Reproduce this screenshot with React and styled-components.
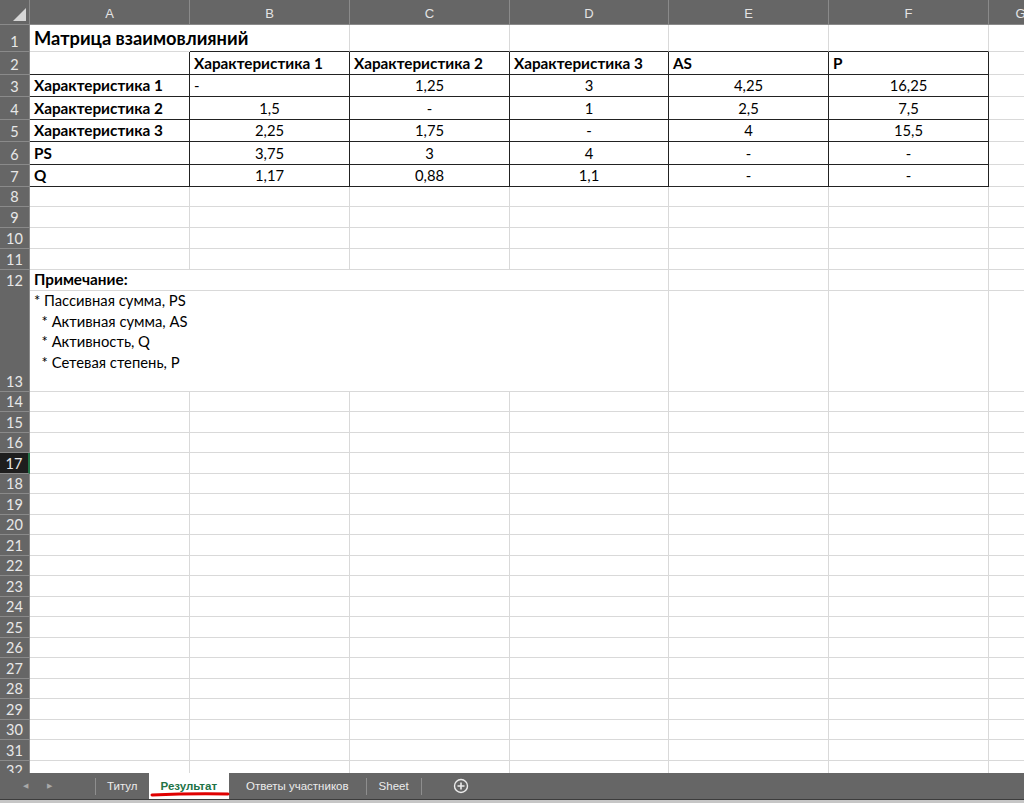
import React from "react";
import styled, { createGlobalStyle } from "styled-components";

const Global = createGlobalStyle`
  html, body { margin: 0; padding: 0; background: #ffffff; }
  body { font-family: Lato, "Noto Sans", sans-serif; }
`;

const COLS = "30px 160px 160px 160px 159px 160px 160px 64px";
const GRID = "#d9d9d9";
const DARK = "#222222";
const HEAD_BG = "#666666";
const HEAD_LINE = "#8a8a8a";

const Window = styled.div`
  width: 1024px;
  height: 803px;
  display: flex;
  flex-direction: column;
  overflow: hidden;
  background: #fff;
`;

const Sheet = styled.div`
  flex: 1;
  overflow: hidden;
  display: flex;
  flex-direction: column;
`;

const Row = styled.div`
  display: grid;
  grid-template-columns: ${COLS};
  height: ${(p) => p.$h}px;
  flex: none;
`;

const ColHead = styled.div`
  background: ${HEAD_BG};
  color: #e4e4e4;
  font-family: "Liberation Sans", Arial, sans-serif;
  font-size: 13px;
  display: flex;
  align-items: center;
  justify-content: center;
  border-right: 1px solid ${HEAD_LINE};
  border-bottom: 1px solid ${HEAD_LINE};
  box-sizing: border-box;
  padding-top: 2px;
`;

const Corner = styled(ColHead)`
  position: relative;
  &::after {
    content: "";
    position: absolute;
    right: 3px;
    bottom: 3px;
    width: 0;
    height: 0;
    border-left: 13px solid transparent;
    border-bottom: 13px solid #d6d6d6;
  }
`;

const RowHead = styled.div`
  background: ${(p) => (p.$active ? "#1e1e1e" : HEAD_BG)};
  color: #e8e8e8;
  font-family: Lato, "Noto Sans", sans-serif;
  font-size: 14.5px;
  display: flex;
  align-items: flex-end;
  justify-content: center;
  padding-bottom: 1px;
  box-sizing: border-box;
  border-bottom: 1px solid ${HEAD_LINE};
  border-right: ${(p) => (p.$active ? "2px solid #217346" : `1px solid ${HEAD_LINE}`)};
`;

const Cell = styled.div`
  grid-column: span ${(p) => p.$span || 1};
  box-sizing: border-box;
  border-right: 1px solid ${(p) => (p.$nr ? "transparent" : p.$br ? DARK : GRID)};
  border-bottom: 1px solid ${(p) => (p.$bb ? DARK : GRID)};
  display: flex;
  align-items: flex-end;
  justify-content: ${(p) =>
    p.$align === "center" ? "center" : p.$align === "right" ? "flex-end" : "flex-start"};
  padding: 0 4px 2px;
  font-family: Lato, "Noto Sans", sans-serif;
  font-size: ${(p) => (p.$size ? p.$size : p.$bold ? 15.3 : 14.8)}px;
  font-weight: ${(p) => (p.$bold ? 700 : 400)};
  color: #000;
  white-space: nowrap;
  overflow: visible;
  min-width: 0;
`;

const NoteCell = styled(Cell)`
  flex-direction: column;
  align-items: flex-start;
  justify-content: flex-start;
  padding: 0 4px;
  line-height: 20.5px;
  white-space: pre;
`;

const TabBar = styled.div`
  height: 30px;
  flex: none;
  display: flex;
  flex-direction: column;
`;

const TabStrip = styled.div`
  height: 26px;
  background: ${HEAD_BG};
  display: flex;
  align-items: stretch;
  font-family: "Liberation Sans", Arial, sans-serif;
  font-size: 11.5px;
  color: #ececec;
`;

const TabFoot = styled.div`
  flex: 1;
  background: #c6c6c6;
  border-top: 1px solid #3c3c3c;
`;

const Nav = styled.div`
  width: 95px;
  display: flex;
  align-items: center;
  gap: 19px;
  padding-left: 23px;
  box-sizing: border-box;
  color: #a8a8a8;
  font-size: 7px;
`;

const Sep = styled.div`
  width: 1px;
  background: #8e8e8e;
  margin: 5px 0 4px;
`;

const Tab = styled.div`
  position: relative;
  display: flex;
  align-items: center;
  padding: 0 ${(p) => p.$pad || 12}px;
  background: ${(p) => (p.$active ? "#ffffff" : "transparent")};
  color: ${(p) => (p.$active ? "#217346" : "#ececec")};
  font-weight: ${(p) => (p.$active ? 700 : 400)};
`;

const Scribble = styled.svg`
  position: absolute;
  left: 1px;
  bottom: 2px;
  width: 80px;
  height: 6px;
`;

const AddBtn = styled.div`
  display: flex;
  align-items: center;
  margin-left: 31px;
`;

const colLetters = ["A", "B", "C", "D", "E", "F", "G"];

const tableRows = [
  ["Характеристика 1", "-", "1,25", "3", "4,25", "16,25"],
  ["Характеристика 2", "1,5", "-", "1", "2,5", "7,5"],
  ["Характеристика 3", "2,25", "1,75", "-", "4", "15,5"],
  ["PS", "3,75", "3", "4", "-", "-"],
  ["Q", "1,17", "0,88", "1,1", "-", "-"],
];

const lowHeights = [];
for (let i = 14; i <= 33; i++) lowHeights.push(i % 2 === 0 ? 20 : 21);

function EmptyRow({ n, h, active }) {
  return (
    <Row $h={h}>
      <RowHead $active={active}>{n}</RowHead>
      {colLetters.map((c) => (
        <Cell key={c} />
      ))}
    </Row>
  );
}

export default function App() {
  return (
    <Window>
      <Global />
      <Sheet>
        <Row $h={25}>
          <Corner />
          {colLetters.map((c) => (
            <ColHead key={c}>{c}</ColHead>
          ))}
        </Row>

        <Row $h={27}>
          <RowHead>1</RowHead>
          <Cell $bold $size={18.3} $nr>
            Матрица взаимовлияний
          </Cell>
          <Cell $bb />
          <Cell $bb />
          <Cell $bb />
          <Cell $bb />
          <Cell $bb />
          <Cell />
        </Row>

        <Row $h={23}>
          <RowHead>2</RowHead>
          <Cell $bb $br />
          {["Характеристика 1", "Характеристика 2", "Характеристика 3", "AS", "P"].map((t) => (
            <Cell key={t} $bb $br $bold>
              {t}
            </Cell>
          ))}
          <Cell />
        </Row>

        {tableRows.map((r, i) => (
          <Row key={i} $h={i % 2 === 0 ? 22 : 23}>
            <RowHead>{i + 3}</RowHead>
            <Cell $bb $br $bold>
              {r[0]}
            </Cell>
            {r.slice(1).map((v, j) => (
              <Cell key={j} $bb $br $align={i === 0 && j === 0 ? "left" : "center"}>
                {v}
              </Cell>
            ))}
            <Cell />
          </Row>
        ))}

        <EmptyRow n={8} h={20} />
        <EmptyRow n={9} h={21} />
        <EmptyRow n={10} h={21} />
        <EmptyRow n={11} h={21} />

        <Row $h={20}>
          <RowHead>12</RowHead>
          <Cell $span={4} $bold>
            Примечание:
          </Cell>
          <Cell />
          <Cell />
          <Cell />
        </Row>

        <Row $h={102}>
          <RowHead>13</RowHead>
          <NoteCell $span={4}>
            <span>* Пассивная сумма, PS</span>
            <span>{"  * Активная сумма, AS"}</span>
            <span>{"  * Активность, Q"}</span>
            <span>{"  * Сетевая степень, P"}</span>
          </NoteCell>
          <Cell />
          <Cell />
          <Cell />
        </Row>

        {lowHeights.map((h, i) => (
          <EmptyRow key={i} n={14 + i} h={h} active={14 + i === 17} />
        ))}
      </Sheet>

      <TabBar>
        <TabStrip>
          <Nav>
            <span>◀</span>
            <span>▶</span>
          </Nav>
          <Sep />
          <Tab $pad={11}>Титул</Tab>
          <Tab $active>
            Результат
            <Scribble viewBox="0 0 80 6">
              <path d="M2 4 C 20 3.2, 50 2.4, 78 3" stroke="#e00000" strokeWidth="3" fill="none" strokeLinecap="round" />
            </Scribble>
          </Tab>
          <Tab $pad={17}>Ответы участников</Tab>
          <Sep />
          <Tab>Sheet</Tab>
          <Sep />
          <AddBtn>
            <svg width="16" height="16" viewBox="0 0 16 16">
              <circle cx="8" cy="8" r="6.5" stroke="#ececec" strokeWidth="1.4" fill="none" />
              <path d="M8 4.5v7M4.5 8h7" stroke="#ececec" strokeWidth="1.6" />
            </svg>
          </AddBtn>
        </TabStrip>
        <TabFoot />
      </TabBar>
    </Window>
  );
}
